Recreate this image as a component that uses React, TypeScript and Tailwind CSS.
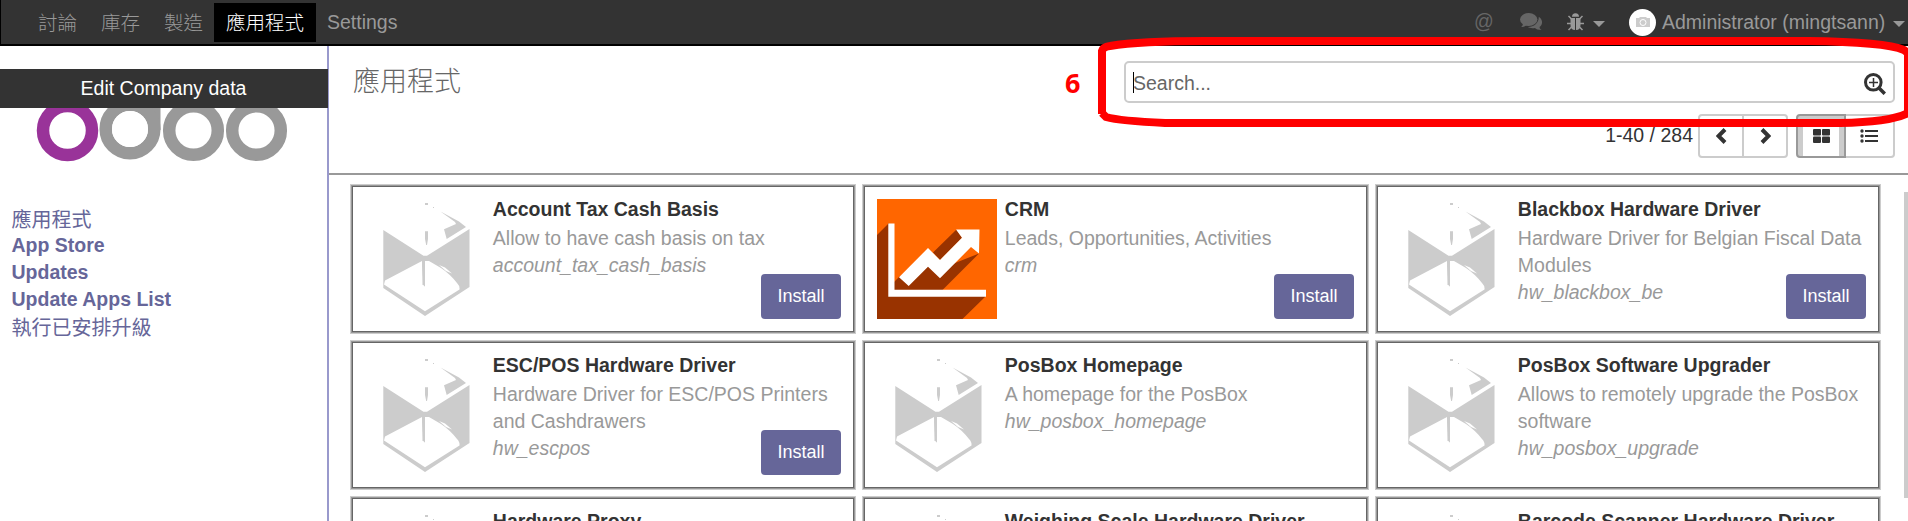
import React from "react";

type AppInfo = { name: string; desc: string; tech: string; install?: boolean; crm?: boolean };

const APPS: AppInfo[] = [
  { name: "Account Tax Cash Basis", desc: "Allow to have cash basis on tax", tech: "account_tax_cash_basis", install: true },
  { name: "CRM", desc: "Leads, Opportunities, Activities", tech: "crm", install: true, crm: true },
  { name: "Blackbox Hardware Driver", desc: "Hardware Driver for Belgian Fiscal Data Modules", tech: "hw_blackbox_be", install: true },
  { name: "ESC/POS Hardware Driver", desc: "Hardware Driver for ESC/POS Printers and Cashdrawers", tech: "hw_escpos", install: true },
  { name: "PosBox Homepage", desc: "A homepage for the PosBox", tech: "hw_posbox_homepage" },
  { name: "PosBox Software Upgrader", desc: "Allows to remotely upgrade the PosBox software", tech: "hw_posbox_upgrade" },
  { name: "Hardware Proxy", desc: "", tech: "" },
  { name: "Weighing Scale Hardware Driver", desc: "", tech: "" },
  { name: "Barcode Scanner Hardware Driver", desc: "", tech: "" },
];

function BoxIcon() {
  return (
    <svg className="block size-[120px]" viewBox="0 0 120 120" fill="#ccc">
      <path d="M18.300 31 58.500 56.700H62L104.500 30V88L60 117 18.300 89ZM57 62 20 81.500 19 85.500 60 112.300 94.500 90.500Q95 87 92 84 85 75 76 69L64 62H60V87.500L58.500 86H57.500Z" fillRule="evenodd" />
      <path d="M57 61H60V87.500L58.500 86Z" />
      <path d="M60 32.300h3V40L62 46h-.8L60 40ZM60 4h3v2h-3ZM68 8h1v1h-1Z" />
      <path d="M75.500 12.500 94 22.500 101 28 81.700 40 79 30.300 91 25 90 23Z" />
      <path d="M74 66 80 68.500 87 74.500 81 72Z" fill="#fff" />
    </svg>
  );
}

function CrmIcon() {
  return (
    <svg className="block size-[120px]" viewBox="0 0 120 120">
      <path fill="#f60" d="M0 0h120v120H0z" />
      <path fill="#930" d="M0 36 12 24V94H109V97L85.500 120H0Z" />
      <path fill="#930" d="M17 83 22 78 51 60 63 70 102 54.500 65 91.500H17ZM79.500 30.500 56 53.500 63 61 85 38.700Z" />
      <path fill="#fff" d="M11.300 24.500h6.200v66.300H109v7H11.300z" />
      <path fill="#fff" d="M22 78.300 51 49 63 61 85 38.700 79 30.500H102.500L102 54.500 94 48 63 79.300 51 67.700 31.700 87Z" />
    </svg>
  );
}

function AppCard({ app }: { app: AppInfo }) {
  return (
    <article className="h-[150px] border border-[#ccc] bg-[#999] p-px">
      <div className="relative flex h-[146px] border border-[#666] bg-white pt-3 pl-3">
        <div className="h-[120px] w-[120px] shrink-0">{app.crm ? <CrmIcon /> : <BoxIcon />}</div>
        <div className="-mt-[5px] w-[364px] shrink-0 pl-[7.8px]">
          <h2 className="mb-px text-[19.5px] leading-[30px] font-bold text-[#333]">{app.name}</h2>
          <p className="w-[350px] text-[19.5px] leading-[27px] text-[#999]">{app.desc}</p>
          <p className="text-[19.5px] leading-[27px] text-[#999] italic">{app.tech}</p>
        </div>
        {app.install && (
          <button className="absolute right-3 bottom-3 h-[45px] w-20 rounded-[4px] bg-[#669] text-[18px] text-white">
            Install
          </button>
        )}
      </div>
    </article>
  );
}

function Caret() {
  return (
    <svg className="h-[6px] w-3" viewBox="0 0 12 6" fill="#999">
      <path d="M0 0h12L6 6Z" />
    </svg>
  );
}

function Navbar() {
  return (
    <nav className="flex h-[46px] items-start border-b-2 border-l border-b-black border-l-black bg-[#333] text-[19.5px] text-[#999]">
      <div className="flex h-full grow items-start pt-[3px] pl-[25px] font-light">
        <span className="w-[63px] pl-3 leading-[41px]">討論</span>
        <span className="w-[63px] pl-3 leading-[41px]">庫存</span>
        <span className="w-[62px] pl-3 leading-[41px]">製造</span>
        <span className="h-[39px] w-[102px] bg-black pl-3 leading-[41px] text-white">應用程式</span>
        <span className="pl-[11px] leading-[38px] font-normal">Settings</span>
      </div>
      <div className="flex h-[44px] items-center">
        <span className="w-[45px] pb-[3px] text-[19.5px] leading-[38px] text-[#666]">@</span>
        <svg className="mr-[25px] ml-px h-[18px] w-[22px]" viewBox="0 0 22 18" fill="#666">
          <ellipse cx="8.700" cy="6.500" rx="8.700" ry="6.500" />
          <path d="M3 10C3 13 1 14 1 14 4 14 6 13 8 11ZM18.800 4C23 6 23 12 19.500 14 19.500 16 21.500 17 21.500 17 18 17 16 16 15 15 12 15.500 9 15 8 14 14 14 18.800 10 18.800 4Z" />
        </svg>
        <svg className="mr-[9px] h-[18px] w-[17px]" viewBox="0 0 17 18" fill="#999">
          <path d="M5 3.800a3.500 3.500 0 0 1 7 0Z" />
          <path d="M3.500 5H8V17C5 17 3.500 15 3.500 12ZM9 5H13.500V12C13.500 15 12 17 9 17Z" />
          <path d="M1.500 3 4.500 6M15.500 3 12.500 6M0 10.500H4M13 10.500H17M1.500 17 5 13.500M15.500 17 12 13.500" fill="none" stroke="#999" strokeWidth="1.500" />
        </svg>
        <span className="flex pt-1"><Caret /></span>
        <span className="mr-[6px] ml-[24px] flex size-[27px] items-center justify-center rounded-full bg-white">
          <svg className="h-[10px] w-[14px]" viewBox="0 0 14 10" fill="#ccc">
            <path d="M0 1H3L4 0H10L11 1H14V10H0Z" />
            <circle cx="7" cy="5.500" r="3" fill="none" stroke="#fff" />
          </svg>
        </span>
        <span className="w-[231px] leading-[38px] whitespace-nowrap">Administrator (mingtsann)</span>
        <span className="mr-[3px] flex pt-1"><Caret /></span>
      </div>
    </nav>
  );
}

function Sidebar() {
  return (
    <aside className="w-[329px] shrink-0 border-r-2 border-[#99c] pt-[23px]">
      <div className="-mr-px h-[39px] bg-[#333] pr-px text-center text-[19.5px] leading-[38px] text-white">Edit Company data</div>
      <svg className="ml-[36px] block h-[54px] w-[254px]" viewBox="0 0 254 54" fill="none" strokeWidth="12.500">
        <circle cx="31.500" cy="22.500" r="24.500" stroke="#939" />
        <path d="M94 0H124.500V22H112V8Z" fill="#999" />
        <circle cx="94" cy="21" r="24.300" stroke="#999" />
        <circle cx="157.500" cy="22.500" r="24.300" stroke="#999" />
        <circle cx="220.500" cy="22.500" r="24.300" stroke="#999" />
        <circle cx="94" cy="21" r="18" fill="#fff" />
      </svg>
      <ul className="pt-[42px] pl-[11.5px] text-[19.5px] leading-[27px] font-bold text-[#669]">
        <li className="h-7 text-[20px] leading-[33px] font-normal">應用程式</li>
        <li>App Store</li>
        <li>Updates</li>
        <li>Update Apps List</li>
        <li className="text-[20px] leading-[30px] font-normal">執行已安排升級</li>
      </ul>
    </aside>
  );
}

function ControlPanel() {
  return (
    <header className="flex h-[129px] justify-between border-b-2 border-[#999] pr-[13px] pl-[24px]">
      <h1 className="pt-[16px] text-[27px] leading-[41px] font-light text-[#666]">應用程式</h1>
      <div className="flex">
        <span className="mt-[21px] w-[59px] font-['Noto_Sans',sans-serif] text-[27px] leading-[32px] font-bold text-[#f00]">6</span>
        <div className="w-[771px] pt-[15px]">
          <div className="flex h-[42px] items-center rounded-[5px] border-2 border-[#ccc] pr-[7px] pl-[7px]">
            <span className="h-[21px] w-px bg-black" />
            <span className="-ml-px grow pt-px text-[19.5px] leading-[38px] text-[#666]">Search...</span>
            <svg className="mt-1 size-[22px]" viewBox="0 0 22 22" fill="none" stroke="#333">
              <circle cx="9.300" cy="9.300" r="7.800" strokeWidth="3" />
              <path d="m14.500 14.500 6.300 6.300" strokeWidth="3.500" />
              <path d="M5 9.500h9M9.500 5v9" strokeWidth="1.500" />
            </svg>
          </div>
          <div className="mt-[11px] flex h-[44px] justify-end text-[19.5px] text-[#333]">
            <span className="mr-[5px] leading-[42px]">1-40 / 284</span>
            <div className="mr-2 flex w-[90px] rounded-[4px] border-2 border-[#ccc]">
              <span className="flex w-11 items-center justify-center border-r-2 border-[#ccc]">
                <svg className="h-4 w-[11px]" viewBox="0 0 11 16" fill="none" stroke="#333" strokeWidth="4"><path d="M9 1.500 2.500 8 9 14.500" /></svg>
              </span>
              <span className="flex w-[42px] items-center justify-center">
                <svg className="h-4 w-[11px]" viewBox="0 0 11 16" fill="none" stroke="#333" strokeWidth="4"><path d="M2 1.500 8.500 8 2 14.500" /></svg>
              </span>
            </div>
            <span className="flex w-[50px] items-center justify-center rounded-l-[4px] border-2 border-[#999] bg-[#ccc] px-[5px] pt-1">
              <span className="flex h-full w-full items-center justify-center bg-white pb-1">
                <svg className="h-[14px] w-[17px]" viewBox="0 0 17 14" fill="#333">
                  <rect width="8" height="6.500" rx="1" /><rect x="9" width="8" height="6.500" rx="1" />
                  <rect y="7.500" width="8" height="6.500" rx="1" /><rect x="9" y="7.500" width="8" height="6.500" rx="1" />
                </svg>
              </span>
            </span>
            <span className="flex w-[49px] items-center justify-center rounded-r-[4px] border-2 border-l-0 border-[#ccc] pr-px">
              <svg className="h-[14px] w-[18px]" viewBox="0 0 18 14" fill="#333">
                <path d="M5 1h13v2H5zM5 6h13v2H5zM5 11h13v2H5z" />
                <circle cx="2" cy="2" r="1.700" /><circle cx="2" cy="7" r="1.700" /><circle cx="2" cy="12" r="1.700" />
              </svg>
            </span>
          </div>
        </div>
      </div>
    </header>
  );
}

export default function App() {
  return (
    <div className="relative h-[521px] w-[1908px] overflow-hidden bg-white font-['Liberation_Sans','Noto_Sans_CJK_TC',sans-serif]">
      <Navbar />
      <div className="flex h-[475px]">
        <Sidebar />
        <main className="w-[1579px]">
          <ControlPanel />
          <div className="flex justify-between pl-[21px]">
            <section className="grid grid-cols-[506px_507px_506px] gap-[6px] pt-[9px]">
              {APPS.map((app) => <AppCard key={app.name} app={app} />)}
            </section>
            <div className="mt-[17px] h-[306px] w-1 bg-[#ccc]" />
          </div>
        </main>
      </div>
      <svg className="absolute top-0 left-0 h-[140px] w-[1908px]" viewBox="0 0 1908 140" fill="none" stroke="#f00" strokeWidth="8">
        <path d="M1102 114V51Q1103 47 1110 46 1140 41 1205 41H1808Q1885 42 1904 50L1908 53V113Q1890 122 1840 123H1165Q1120 121 1106 117L1102 113" />
      </svg>
    </div>
  );
}
